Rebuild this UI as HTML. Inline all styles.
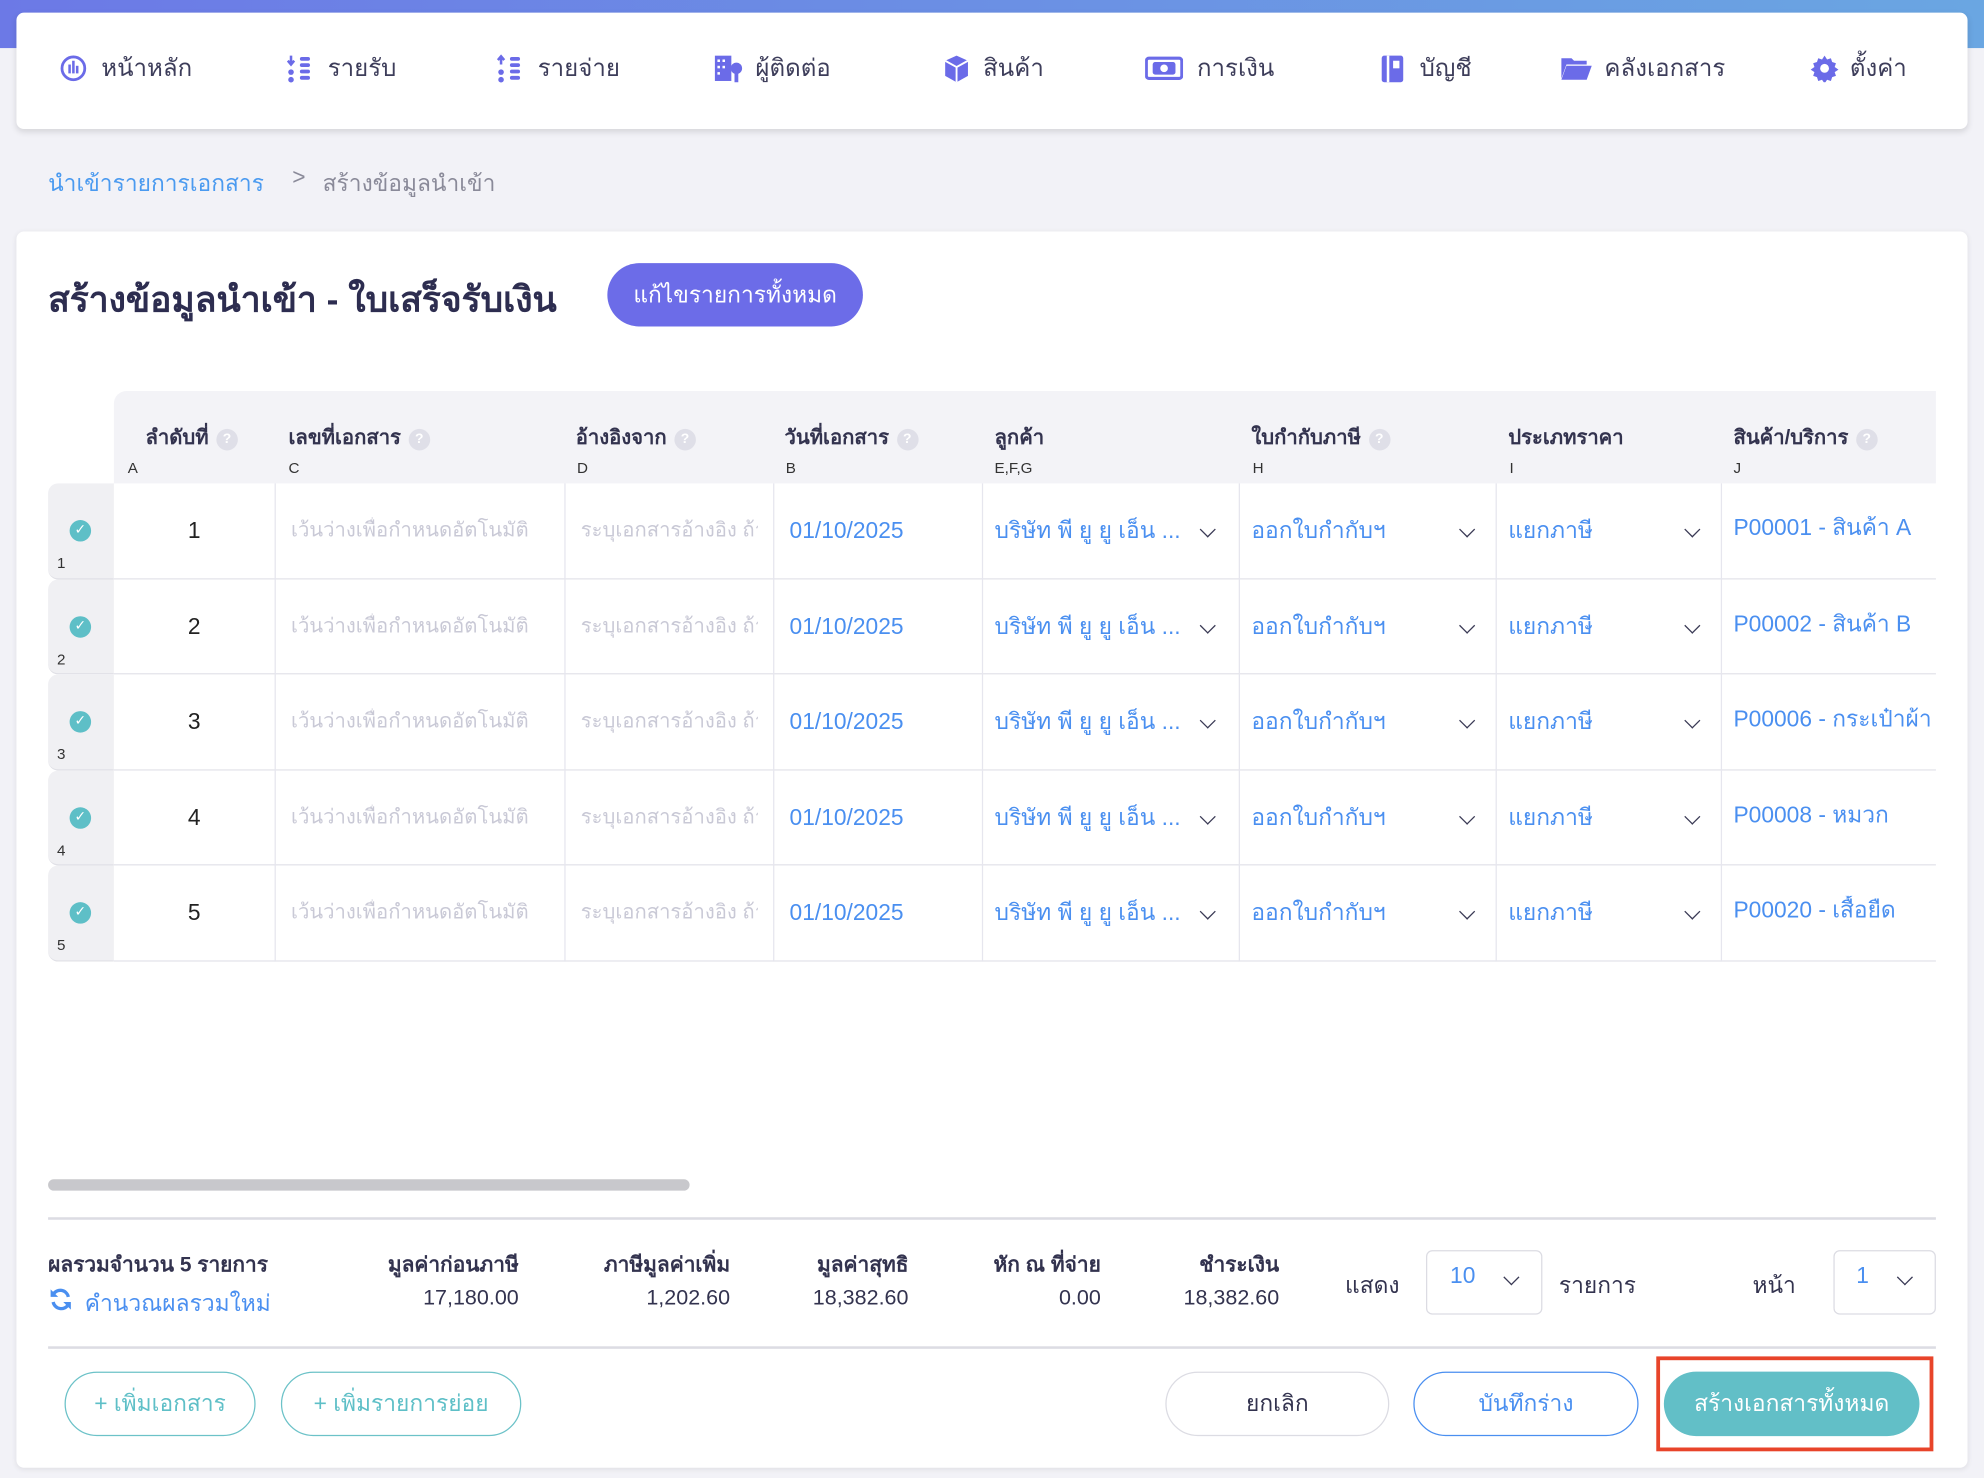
<!DOCTYPE html>
<html><head><meta charset="utf-8">
<style>
*{margin:0;padding:0;box-sizing:border-box}
html,body{width:1984px;height:1478px;overflow:hidden;background:#f2f2f7}
#w{position:absolute;left:0;top:0;width:1568px;height:1168px;transform:scale(1.2653);transform-origin:0 0;font-family:"Liberation Sans","DejaVu Sans",sans-serif;color:#33334f}
.a{position:absolute;white-space:nowrap}
.top{left:0;top:0;width:1568px;height:38px;background:linear-gradient(90deg,#6c79e6,#6aa6e2)}
.nav{left:13px;top:10px;width:1542px;height:92px;background:#fff;border-radius:6px;box-shadow:0 2px 5px rgba(0,0,0,.12)}
.ni{top:42px;font-size:19px;color:#3d3d5a;line-height:26px}
.ic{position:absolute;top:43px}
.card{left:13px;top:183px;width:1542px;height:977px;background:#fff;border-radius:6px;box-shadow:0 1px 4px rgba(0,0,0,.08)}
.hl{top:334px;font-size:16px;font-weight:bold;color:#33334f}
.hl i{display:inline-block;width:17px;height:17px;border-radius:50%;background:#dfdfe8;color:#fff;font-size:11px;font-style:normal;text-align:center;line-height:17px;vertical-align:1px;margin-left:6px}
.lt{top:363px;font-size:12px;color:#333}
.cell{position:absolute;font-size:18px;line-height:22px;white-space:nowrap;overflow:hidden}
.ph{color:#c9c9d6;font-size:16px}
.bl{color:#4a8ff0}
.chev{position:absolute;width:9px;height:9px;border-right:1.6px solid #3a3a55;border-bottom:1.6px solid #3a3a55;transform:rotate(45deg)}
.sl{top:987px;font-size:16.5px;font-weight:bold;color:#33334f}
.sv{top:1016px;font-size:17px;color:#33334f}
.btn{position:absolute;top:1084px;height:51px;border-radius:26px;font-size:18px;text-align:center;line-height:49px}
</style></head><body><div id="w">
<div class="a top"></div>
<div class="a nav"></div>
<svg class="ic" style="left:47px" width="22" height="24" viewBox="0 0 22 24"><circle cx="11" cy="11" r="9" fill="none" stroke="#6b6be8" stroke-width="2.2"/><rect x="7" y="8" width="2" height="7" fill="#6b6be8"/><rect x="10" y="5" width="2" height="10" fill="#6b6be8"/><rect x="13" y="9" width="2" height="6" fill="#6b6be8"/></svg>
<div class="a ni" style="left:80px">หน้าหลัก</div>
<svg class="ic" style="left:226px" width="22" height="24" viewBox="0 0 22 24"><path d="M4 1v6M1.5 5l2.5 3 2.5-3" stroke="#6b6be8" stroke-width="2" fill="none"/><circle cx="4" cy="14" r="2.2" fill="#6b6be8"/><circle cx="4" cy="20" r="2.2" fill="#6b6be8"/><g fill="#6b6be8"><rect x="11" y="2" width="8" height="3" rx="1.5"/><rect x="11" y="7" width="8" height="3" rx="1.5"/><rect x="11" y="12" width="8" height="3" rx="1.5"/><rect x="11" y="17" width="8" height="3" rx="1.5"/></g></svg>
<div class="a ni" style="left:259px">รายรับ</div>
<svg class="ic" style="left:392px" width="22" height="24" viewBox="0 0 22 24"><path d="M4 8V2M1.5 4.5L4 1.5l2.5 3" stroke="#6b6be8" stroke-width="2" fill="none"/><circle cx="4" cy="14" r="2.2" fill="#6b6be8"/><circle cx="4" cy="20" r="2.2" fill="#6b6be8"/><g fill="#6b6be8"><rect x="11" y="2" width="8" height="3" rx="1.5"/><rect x="11" y="7" width="8" height="3" rx="1.5"/><rect x="11" y="12" width="8" height="3" rx="1.5"/><rect x="11" y="17" width="8" height="3" rx="1.5"/></g></svg>
<div class="a ni" style="left:425px">รายจ่าย</div>
<svg class="ic" style="left:564px" width="24" height="24" viewBox="0 0 24 24"><rect x="1" y="1" width="13" height="20" fill="#6b6be8"/><g fill="#fff"><rect x="3" y="4" width="2" height="2"/><rect x="7" y="4" width="2" height="2"/><rect x="3" y="9" width="2" height="2"/><rect x="7" y="9" width="2" height="2"/><rect x="3" y="14" width="2" height="2"/></g><circle cx="18" cy="11" r="4.5" fill="#6b6be8"/><rect x="16.5" y="14" width="3" height="8" fill="#6b6be8"/></svg>
<div class="a ni" style="left:597px">ผู้ติดต่อ</div>
<svg class="ic" style="left:745px" width="22" height="24" viewBox="0 0 22 24"><path d="M11 1l9 4v12l-9 5-9-5V5z" fill="#6b6be8"/><path d="M2 5l9 5 9-5M11 10v12" stroke="#fff" stroke-width="1.5" fill="none"/></svg>
<div class="a ni" style="left:777px">สินค้า</div>
<svg class="ic" style="left:905px" width="30" height="22" viewBox="0 0 30 22"><rect x="1" y="3" width="28" height="16" rx="2" fill="none" stroke="#6b6be8" stroke-width="2.4"/><rect x="6" y="6" width="18" height="10" rx="2" fill="#6b6be8"/><circle cx="15" cy="11" r="3" fill="#fff"/></svg>
<div class="a ni" style="left:946px">การเงิน</div>
<svg class="ic" style="left:1090px" width="22" height="24" viewBox="0 0 22 24"><rect x="2" y="1" width="17" height="21" rx="2" fill="#6b6be8"/><rect x="6" y="1" width="2" height="21" fill="#fff"/><rect x="11" y="5" width="5" height="6" fill="#fff"/></svg>
<div class="a ni" style="left:1122px">บัญชี</div>
<svg class="ic" style="left:1233px" width="26" height="22" viewBox="0 0 26 22"><path d="M1 3h8l2 2h10v3H5L1 19z" fill="#6b6be8"/><path d="M5 9h20l-4 11H1z" fill="#6b6be8"/></svg>
<div class="a ni" style="left:1268px">คลังเอกสาร</div>
<svg class="ic" style="left:1431px" width="22" height="22" viewBox="0 0 22 22"><path d="M11 1l2 3 3-1 1 3 3 1-1 3 3 2-3 2 1 3-3 1-1 3-3-1-2 3-2-3-3 1-1-3-3-1 1-3-3-2 3-2-1-3 3-1 1-3 3 1z" fill="#6b6be8"/><circle cx="11" cy="11" r="3.5" fill="#fff"/></svg>
<div class="a ni" style="left:1462px">ตั้งค่า</div>

<div class="a" style="left:38px;top:130px;font-size:18px;color:#4a9af0">นำเข้ารายการเอกสาร</div>
<div class="a" style="left:231px;top:130px;font-size:18px;color:#8a8a99">&gt;</div>
<div class="a" style="left:255px;top:130px;font-size:18px;color:#8a8a99">สร้างข้อมูลนำเข้า</div>

<div class="a card"></div>
<div class="a" style="left:38px;top:215px;font-size:28px;font-weight:bold;color:#2d2d50">สร้างข้อมูลนำเข้า - ใบเสร็จรับเงิน</div>
<div class="a" style="left:480px;top:208px;width:202px;height:50px;border-radius:25px;background:#6c6ce8;color:#fff;font-size:18px;text-align:center;line-height:50px">แก้ไขรายการทั้งหมด</div>

<div class="a" style="left:90px;top:309px;width:1440px;height:73px;background:#f3f3f7;border-top-left-radius:10px"></div>
<div class="a hl" style="left:115px">ลำดับที่<i>?</i></div><div class="a lt" style="left:101px">A</div>
<div class="a hl" style="left:228px">เลขที่เอกสาร<i>?</i></div><div class="a lt" style="left:228px">C</div>
<div class="a hl" style="left:455px">อ้างอิงจาก<i>?</i></div><div class="a lt" style="left:456px">D</div>
<div class="a hl" style="left:620px">วันที่เอกสาร<i>?</i></div><div class="a lt" style="left:621px">B</div>
<div class="a hl" style="left:786px">ลูกค้า</div><div class="a lt" style="left:786px">E,F,G</div>
<div class="a hl" style="left:989px">ใบกำกับภาษี<i>?</i></div><div class="a lt" style="left:990px">H</div>
<div class="a hl" style="left:1192px">ประเภทราคา</div><div class="a lt" style="left:1193px">I</div>
<div class="a hl" style="left:1370px">สินค้า/บริการ<i>?</i></div><div class="a lt" style="left:1370px">J</div>

<div id="rows"></div>
<script>
var p=["P00001 - สินค้า A","P00002 - สินค้า B","P00006 - กระเป๋าผ้า","P00008 - หมวก","P00020 - เสื้อยืด"];
var h="";
for(var i=0;i<5;i++){var t=382+i*75.6;
h+='<div class="a" style="left:38px;top:'+t+'px;width:52px;height:75.6px;background:#f0f0f3;border-radius:8px 0 0 8px;border-bottom:1px solid #e0e0e6"></div>';
h+='<div class="a" style="left:55px;top:'+(t+29)+'px;width:17px;height:17px;border-radius:50%;background:#5ebfc7;color:#fff;font-size:11px;text-align:center;line-height:17px">✓</div>';
h+='<div class="a" style="left:45px;top:'+(t+56)+'px;font-size:12px;color:#333">'+(i+1)+'</div>';
h+='<div class="a" style="left:90px;top:'+t+'px;width:1440px;height:75.6px;border-bottom:1.5px solid #e3e3ea"></div>';
[217,446,611,776,979,1182,1360].forEach(function(x){h+='<div class="a" style="left:'+x+'px;top:'+t+'px;width:1px;height:75.6px;background:#e6e6ee"></div>'});
var c=t+26;
h+='<div class="cell" style="left:90px;width:127px;text-align:center;top:'+c+'px;color:#222">'+(i+1)+'</div>';
h+='<div class="cell ph" style="left:230px;top:'+(c+1)+'px;width:205px">เว้นว่างเพื่อกำหนดอัตโนมัติ</div>';
h+='<div class="cell ph" style="left:459px;top:'+(c+1)+'px;width:140px">ระบุเอกสารอ้างอิง ถ้ามี</div>';
h+='<div class="cell bl" style="left:624px;top:'+c+'px">01/10/2025</div>';
h+='<div class="cell bl" style="left:786px;top:'+c+'px">บริษัท พี ยู ยู เอ็น ...</div>';
h+='<div class="chev" style="left:950px;top:'+(c+6)+'px"></div>';
h+='<div class="cell bl" style="left:989px;top:'+c+'px">ออกใบกำกับฯ</div>';
h+='<div class="chev" style="left:1155px;top:'+(c+6)+'px"></div>';
h+='<div class="cell bl" style="left:1192px;top:'+c+'px">แยกภาษี</div>';
h+='<div class="chev" style="left:1333px;top:'+(c+6)+'px"></div>';
h+='<div class="cell bl" style="left:1370px;top:'+(c-2)+'px;width:160px">'+p[i]+'</div>';
}
document.getElementById("rows").innerHTML=h;
</script>

<div class="a" style="left:38px;top:932px;width:507px;height:9px;border-radius:5px;background:#c8c8cc"></div>
<div class="a" style="left:38px;top:962px;width:1492px;height:1.5px;background:#dcdce3"></div>

<div class="a sl" style="left:38px">ผลรวมจำนวน 5 รายการ</div>
<svg class="a" style="left:38px;top:1017px" width="20" height="20" viewBox="0 0 20 20"><path d="M16 8A6.5 6.5 0 0 0 4 6M4 12a6.5 6.5 0 0 0 12 2" fill="none" stroke="#4a8ff0" stroke-width="2.6"/><path d="M2 2v6h6zM18 18v-6h-6z" fill="#4a8ff0"/></svg>
<div class="a" style="left:67px;top:1015px;font-size:18px;color:#4a8ff0">คำนวณผลรวมใหม่</div>
<div class="a sl" style="left:270px;width:140px;text-align:right">มูลค่าก่อนภาษี</div><div class="a sv" style="left:290px;width:120px;text-align:right">17,180.00</div>
<div class="a sl" style="left:440px;width:137px;text-align:right">ภาษีมูลค่าเพิ่ม</div><div class="a sv" style="left:450px;width:127px;text-align:right">1,202.60</div>
<div class="a sl" style="left:600px;width:118px;text-align:right">มูลค่าสุทธิ</div><div class="a sv" style="left:610px;width:108px;text-align:right">18,382.60</div>
<div class="a sl" style="left:750px;width:120px;text-align:right">หัก ณ ที่จ่าย</div><div class="a sv" style="left:760px;width:110px;text-align:right">0.00</div>
<div class="a sl" style="left:890px;width:121px;text-align:right">ชำระเงิน</div><div class="a sv" style="left:900px;width:111px;text-align:right">18,382.60</div>
<div class="a" style="left:1063px;top:1001px;font-size:18px">แสดง</div>
<div class="a" style="left:1127px;top:988px;width:92px;height:51px;border:1px solid #dcdce3;border-radius:5px"></div>
<div class="a" style="left:1146px;top:998px;font-size:18px;color:#4a8ff0">10</div>
<div class="chev" style="left:1190px;top:1005px"></div>
<div class="a" style="left:1232px;top:1001px;font-size:18px">รายการ</div>
<div class="a" style="left:1385px;top:1001px;font-size:18px">หน้า</div>
<div class="a" style="left:1449px;top:988px;width:81px;height:51px;border:1px solid #dcdce3;border-radius:5px"></div>
<div class="a" style="left:1467px;top:998px;font-size:18px;color:#4a8ff0">1</div>
<div class="chev" style="left:1501px;top:1005px"></div>
<div class="a" style="left:38px;top:1064px;width:1492px;height:1.5px;background:#dcdce3"></div>

<div class="btn" style="left:51px;width:151px;border:1.3px solid #6cc2c8;color:#5ebfc7">+ เพิ่มเอกสาร</div>
<div class="btn" style="left:222px;width:190px;border:1.3px solid #6cc2c8;color:#5ebfc7">+ เพิ่มรายการย่อย</div>
<div class="btn" style="left:921px;width:177px;border:1.3px solid #dcdce3;color:#33334f">ยกเลิก</div>
<div class="btn" style="left:1117px;width:178px;border:1.3px solid #4a8ff0;color:#4a8ff0">บันทึกร่าง</div>
<div class="btn" style="left:1315px;width:202px;background:#62bfc7;color:#fff;line-height:51px">สร้างเอกสารทั้งหมด</div>
<div class="a" style="left:1309px;top:1072px;width:219px;height:75px;border:3px solid #e8442a"></div>
</div></body></html>
